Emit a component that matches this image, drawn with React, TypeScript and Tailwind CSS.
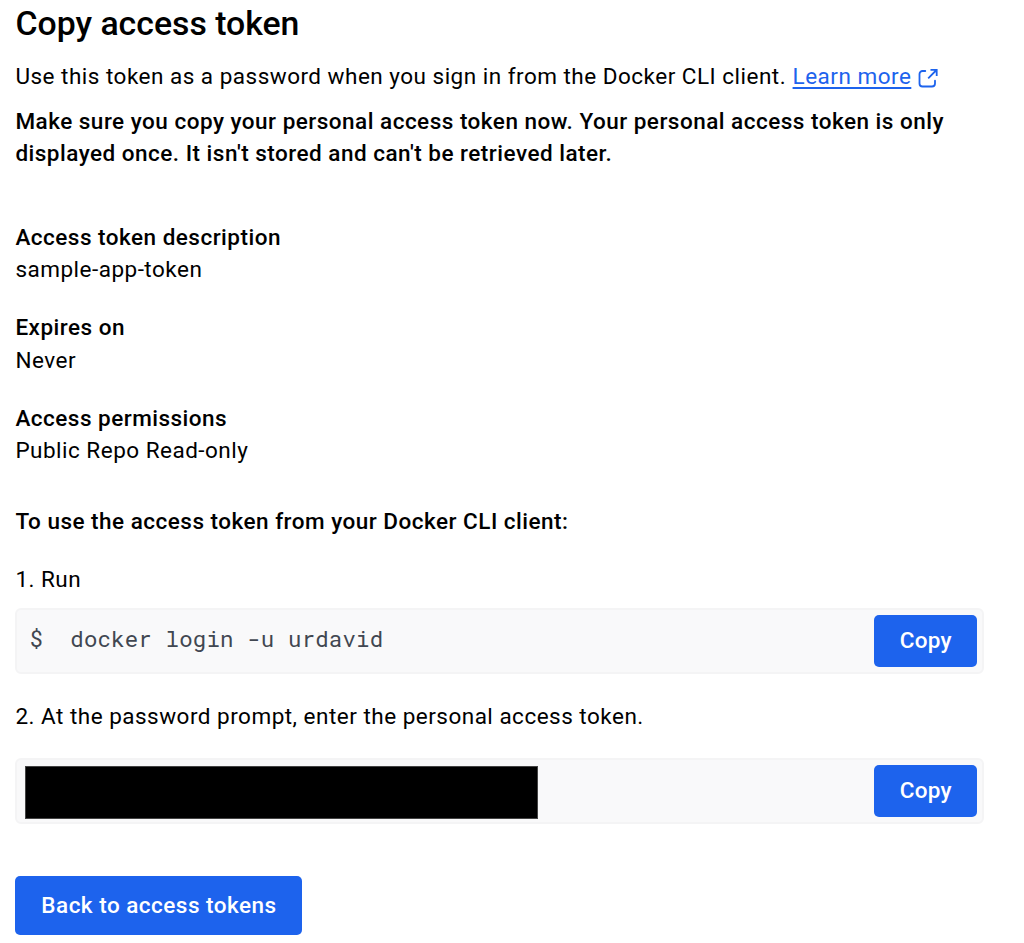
import React from "react";

function Detail({ label, value }: { label: string; value: string }) {
  return (
    <div className="mb-[26px] leading-[32.2px]">
      <dt className="font-medium">{label}</dt>
      <dd>{value}</dd>
    </div>
  );
}

function CopyButton() {
  return (
    <button className="h-[52.5px] w-[103px] shrink-0 rounded-[5px] bg-[#1d63ed] pl-[0.5px] font-medium tracking-[0.3px] text-white">
      Copy
    </button>
  );
}

export default function App() {
  return (
    <main className="h-[943px] w-[1024px] overflow-hidden bg-white pl-[15px] font-['Roboto',sans-serif] text-[22.5px] tracking-[0.49px] text-black">
      <div className="pl-[0.4px]">
        <h1 className="pt-[2px] text-[33.8px] leading-[44px] font-medium tracking-[0px]">Copy access token</h1>
        <p className="mt-[14px] flex items-center leading-[32px] whitespace-nowrap">
          Use this token as a password when you sign in from the Docker CLI client.
          <a href="#" className="ml-[6.5px] flex items-center text-[#1d63ed]">
            <span className="underline decoration-[1.5px] underline-offset-[3px]">Learn more</span>
            <svg className="mt-[3px] ml-[6px] size-[22px]" viewBox="0 0 22 22" fill="none" stroke="currentColor" strokeWidth="1.8" strokeLinecap="round">
              <path d="M8.3 4H5.5a3 3 0 0 0-3 3v9.5a3 3 0 0 0 3 3h9.5a3 3 0 0 0 3-3v-2.8" />
              <path d="M13.5 2.8h6.2V9M19.5 3l-8.3 8.3" strokeLinecap="butt" />
            </svg>
          </a>
        </p>
        <p className="mt-[13px] leading-[32px] font-medium whitespace-nowrap">
          Make sure you copy your personal access token now. Your personal access token is only
          <br />
          displayed once. It isn't stored and can't be retrieved later.
        </p>
        <dl className="mt-[52px]">
          <Detail label="Access token description" value="sample-app-token" />
          <Detail label="Expires on" value="Never" />
          <Detail label="Access permissions" value="Public Repo Read-only" />
        </dl>
        <h2 className="mt-[38.8px] leading-[32px] font-medium">To use the access token from your Docker CLI client:</h2>
        <p className="mt-[26px] leading-[32px]">1. Run</p>
      </div>
      <div className="mt-[13px] flex h-[66px] w-[969px] items-center justify-between rounded-[6px] border-2 border-[#f4f4f5] bg-[#f9f9fa] pr-[5px] pl-[12.5px]">
        <code className="-mt-[4px] font-['Roboto_Mono','DejaVu_Sans_Mono',monospace] text-[22.4px] tracking-[0.17px] whitespace-pre text-[#414751]">$  docker login -u urdavid</code>
        <CopyButton />
      </div>
      <p className="mt-[26px] pl-[0.4px] leading-[32px]">2. At the password prompt, enter the personal access token.</p>
      <div className="mt-[26px] flex h-[66px] w-[969px] items-center justify-between rounded-[6px] border-2 border-[#f4f4f5] bg-[#f9f9fa] pr-[5px] pl-[8px]">
        <div className="mt-[2px] h-[53px] w-[513px] border border-[#444444] bg-black" />
        <CopyButton />
      </div>
      <button className="mt-[52px] h-[59px] w-[287px] rounded-[5px] bg-[#1d63ed] pt-px pl-[1px] font-medium text-white">
        Back to access tokens
      </button>
    </main>
  );
}
